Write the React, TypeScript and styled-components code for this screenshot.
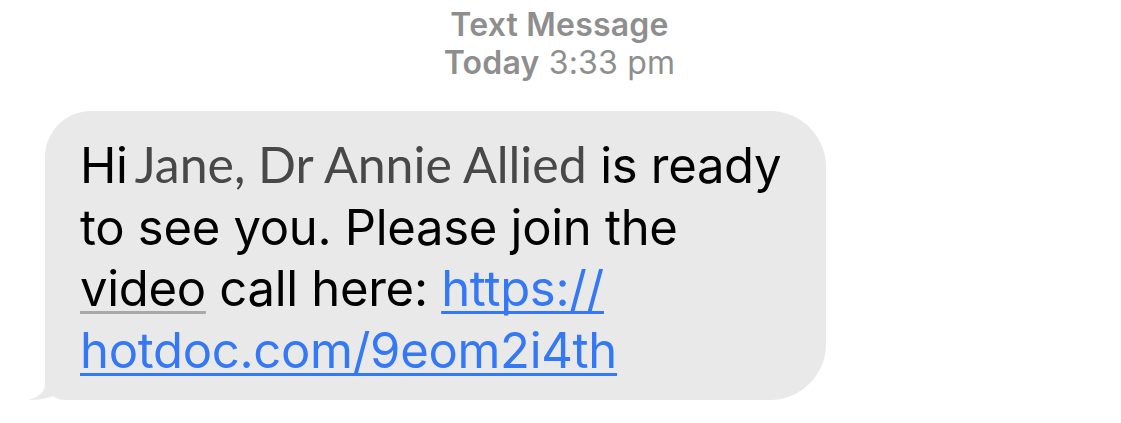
import React from "react";
import styled, { createGlobalStyle } from "styled-components";

const Global = createGlobalStyle`
  html, body { margin: 0; padding: 0; background: #ffffff; }
  body { font-family: Inter, "Liberation Sans", sans-serif; -webkit-font-smoothing: antialiased; }
`;

const Page = styled.div`
  width: 1121px;
  height: 423px;
  display: flex;
  flex-direction: column;
  align-items: flex-start;
  overflow: hidden;
`;

const Header = styled.div`
  align-self: center;
  display: flex;
  flex-direction: column;
  align-items: center;
  padding-top: 6px;
  margin-left: -2px;
  color: #8e8e8e;
  font-size: 32px;
  line-height: 38px;
  letter-spacing: 0.2px;
`;

const HeaderLine = styled.div<{ $bold?: boolean }>`
  font-weight: ${(p) => (p.$bold ? 600 : 400)};
`;

const Strong = styled.span`
  font-weight: 600;
`;

const Bubble = styled.div`
  position: relative;
  margin: 29px 0 0 45px;
  width: 781px;
  box-sizing: border-box;
  padding: 23px 20px 19px 35px;
  background: #e9e9e9;
  border-radius: 46px 56px 56px 20px;
`;

const Body = styled.p`
  position: relative;
  margin: 0;
  font-size: 49px;
  line-height: 61.5px;
  color: #000;
  white-space: nowrap;
  letter-spacing: -0.3px;
`;

const Name = styled.span`
  font-family: Lato, sans-serif;
  font-size: 50px;
  color: #484848;
  letter-spacing: 0;
  margin-left: 7px;
`;

const Detected = styled.span`
  text-decoration: underline;
  text-decoration-color: #a9a9a9;
  text-decoration-thickness: 3px;
  text-underline-offset: 5px;
  text-decoration-skip-ink: none;
`;

const Link = styled.a`
  color: #3478f6;
  text-decoration: underline;
  text-decoration-thickness: 3px;
  text-underline-offset: 5px;
  text-decoration-skip-ink: none;
`;

const Tail = styled.svg`
  position: absolute;
  left: -17px;
  bottom: 0;
`;

export default function App() {
  return (
    <>
      <Global />
      <Page>
        <Header>
          <HeaderLine $bold>Text Message</HeaderLine>
          <HeaderLine>
            <Strong>Today</Strong> 3:33 pm
          </HeaderLine>
        </Header>
        <Bubble>
          <Tail width="67" height="32" viewBox="0 0 67 32">
            <path
              d="M17 0 L17 16 C17 24 10 30 0 32 C14 32 28 29 37 22 C45 28 55 32 67 32 L67 0 Z"
              fill="#e9e9e9"
            />
          </Tail>
          <Body>
            Hi<Name>Jane, Dr Annie Allied</Name> is ready
            <br />
            to see you. Please join the
            <br />
            <Detected>video</Detected> call here: <Link href="#">https://</Link>
            <br />
            <Link href="#">hotdoc.com/9eom2i4th</Link>
          </Body>
        </Bubble>
      </Page>
    </>
  );
}
